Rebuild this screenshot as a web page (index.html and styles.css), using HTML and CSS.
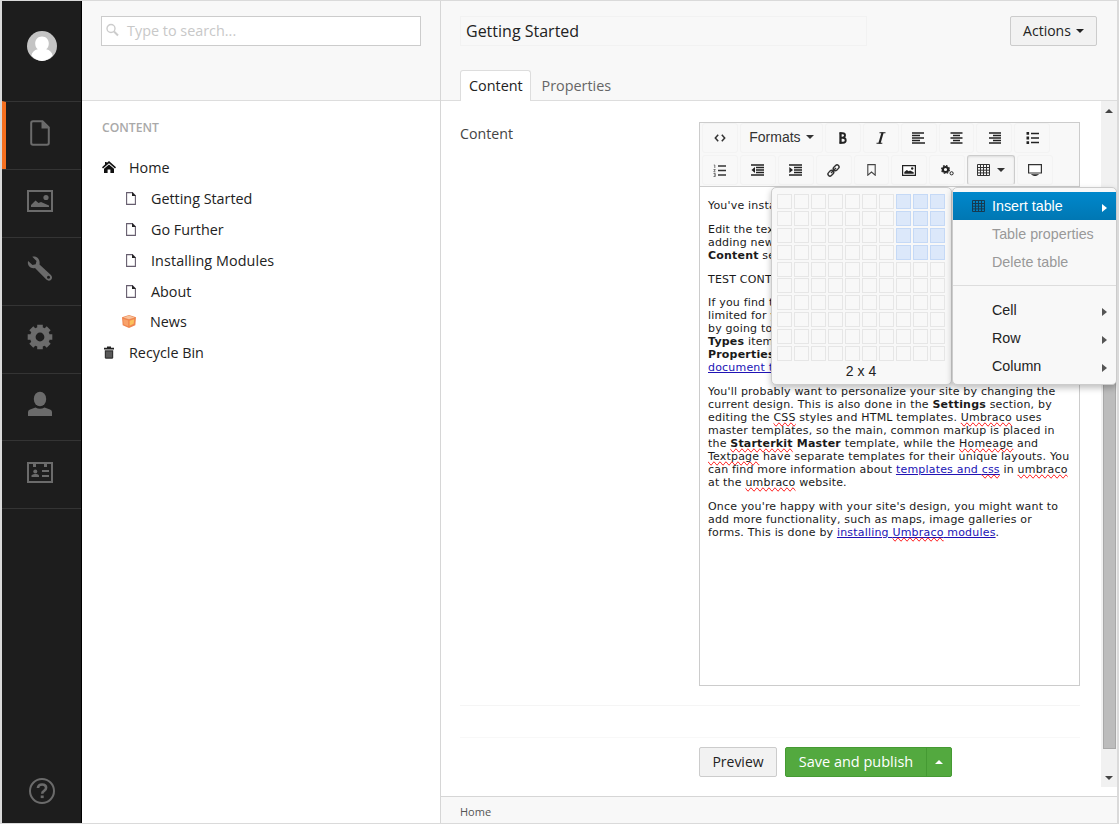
FILE: index.html
```html
<!DOCTYPE html>
<html lang="en">
<head>
<meta charset="utf-8">
<title>Getting Started</title>
<link rel="stylesheet" href="styles.css">
</head>
<body>
<svg class="defs" width="0" height="0">
  <symbol id="page" viewBox="0 0 10 13"><path d="M.6.6H6.400L9.400 3.800V12.4H.6Z" fill="#fff" stroke="#665d6e" stroke-width="1.1"/><path d="M6 0L10 4.100H6Z" fill="#222"/></symbol>
  <symbol id="table" viewBox="0 0 13 12"><path d="M.5.5h12v11H.5ZM.5 3.5h12M.5 6.2h12M.5 8.9h12M3.5.5v11M6.5.5v11M9.5.5v11" fill="none" stroke="currentColor"/></symbol>
</svg>
<div class="app">
  <nav class="rail">
    <div class="rail-user"><svg width="30" height="30" viewBox="0 0 30 30"><circle cx="15" cy="15" r="15" fill="#c4c4c4"/><path d="M15 5.500c4 0 6.800 2.800 6.800 7 0 2.600-1 4.500-2.600 5.800 3.500.8 5.800 3 6.400 6.300A15 15 0 0 1 15 30 15 15 0 0 1 4.400 24.600c.6-3.300 2.900-5.500 6.400-6.300-1.600-1.300-2.600-3.200-2.600-5.800 0-4.200 2.800-7 6.800-7Z" fill="#fff"/></svg></div>
    <a class="rail-item current"><svg width="20" height="26" viewBox="0 0 20 26"><path d="M3 1.200H12.500L18.800 7.500V23q0 1.800-1.800 1.800H3Q1.200 24.800 1.200 23V3Q1.200 1.200 3 1.200Z" fill="none" stroke="#6b6b6b" stroke-width="2"/><path d="M11.500 1v7.500H19Z" fill="#6b6b6b"/></svg></a>
    <a class="rail-item"><svg width="26" height="22" viewBox="0 0 26 22"><path d="M1 1h24v20H1Z" fill="none" stroke="#6b6b6b" stroke-width="2"/><circle cx="19" cy="7.500" r="2.600" fill="#6b6b6b"/><path d="M4 17v-2l4.500-4.500 3 2.500 2.500-1 8 3.500V17Z" fill="#6b6b6b"/></svg></a>
    <a class="rail-item"><svg width="26" height="26" viewBox="0 0 26 26"><path d="M5.300.8L9.500 5 8.700 8.200 5.500 9 1.100 5.100C-.2 9.500 3.500 13.200 8 12l11.300 11.600c1.500 1.500 3.600 1.400 4.800.2 1.300-1.300 1.300-3.300-.2-4.800L12.500 8.500C13.500 3.500 9.800-.3 5.300.8Z" fill="#6b6b6b"/><circle cx="21.500" cy="21.200" r="1.500" fill="#1d1d1d"/></svg></a>
    <a class="rail-item"><svg width="26" height="26" viewBox="-13 -13 26 26"><circle r="7.200" fill="none" stroke="#6b6b6b" stroke-width="5.600"/><g stroke="#6b6b6b" stroke-width="5.600"><path d="M0-12.300V-8M0 12.300V8M-12.300 0H-8M12.300 0H8M-8.700-8.700L-6-6M8.700 8.700L6 6M-8.700 8.700L-6 6M8.700-8.700L6-6"/></g></svg></a>
    <a class="rail-item"><svg width="26" height="26" viewBox="0 0 26 26"><ellipse cx="13" cy="8" rx="6.200" ry="7.300" fill="#6b6b6b"/><path d="M1 25v-4q0-2 2-2.500l5.500-2q4.500 2.500 9 0l5.500 2q2 .5 2 2.500v4Z" fill="#6b6b6b"/></svg></a>
    <a class="rail-item"><svg width="26" height="21" viewBox="0 0 26 21"><path d="M1 1h24v19H1Z" fill="none" stroke="#6b6b6b" stroke-width="2"/><path d="M6 1h3v4H6ZM17 1h3v4h-3ZM15 8h7v2h-7ZM15 13h7v2h-7ZM4.500 15v-1.500q0-1 3.500-1.500t4 1.500V15Z" fill="#6b6b6b"/><circle cx="8.300" cy="9.500" r="2" fill="#6b6b6b"/></svg></a>
    <a class="rail-help"><svg width="28" height="28" viewBox="0 0 28 28"><circle cx="14" cy="14" r="12" fill="none" stroke="#6b6b6b" stroke-width="2"/><path d="M9.900 11q.3-3.500 4.200-3.500 4 0 4 3.300 0 1.700-2 3-1.900 1.200-1.900 2.900" fill="none" stroke="#6b6b6b" stroke-width="2.600"/><path d="M12.700 18.500h3v2.600h-3Z" fill="#6b6b6b"/></svg></a>
  </nav>

  <aside class="tree">
    <header class="tree-head">
      <div class="search"><svg width="13" height="14" viewBox="0 0 13 14"><circle cx="5" cy="5.500" r="4" fill="none" stroke="#ccc" stroke-width="1.400"/><path d="M8 8.500l4 4" stroke="#ccc" stroke-width="2"/></svg><span>Type to search...</span></div>
    </header>
    <h5 class="tree-title">CONTENT</h5>
    <ul class="nodes">
      <li><svg width="14" height="12" viewBox="0 0 14 12"><path d="M7 0l7 6.200-1 1.200L7 2.200 1 7.400 0 6.200 3 3.500V1h1.700v1ZM7 3.400l5 4.300V12H8.400V8.500H5.600V12H2V7.700Z" fill="#111"/></svg>Home</li>
      <li class="child"><svg width="10" height="13"><use href="#page"/></svg>Getting Started</li>
      <li class="child"><svg width="10" height="13"><use href="#page"/></svg>Go Further</li>
      <li class="child wide"><svg width="10" height="13"><use href="#page"/></svg>Installing Modules</li>
      <li class="child"><svg width="10" height="13"><use href="#page"/></svg>About</li>
      <li class="child news"><svg width="14" height="13" viewBox="0 0 14 13"><path d="M7 0l7 2.200-.7 8L7 13 .7 10.200 0 2.200Z" fill="#ef8650"/><path d="M7 .6l5.600 1.800L7 4.300 1.400 2.400Z" fill="#f7c29b"/><path d="M1.200 4l5 1.600v5.600L1.700 9.300Z" fill="#f8a26a"/><path d="M7.600 5.800l4.600-1.600-.5 4.600-4.100 2Z" fill="#fbc15c"/></svg>News</li>
      <li class="bin"><svg width="10" height="13" viewBox="0 0 10 13"><path d="M0 1.800h3V.4h4v1.400h3v1.700H0Z" fill="#222"/><path d="M.8 4.300h8.400v7q0 1.500-1.300 1.500H2.100Q.8 12.800.8 11.300Z" fill="#333"/><path d="M3 5.500v6M5 5.500v6M7 5.500v6" stroke="#888" stroke-width=".9"/></svg>Recycle Bin</li>
    </ul>
  </aside>

  <main class="main">
    <header class="main-head">
      <div class="title-row">
        <div class="title-input">Getting Started</div>
        <button class="btn actions">Actions<i class="caret"></i></button>
      </div>
      <div class="tabs"><a class="tab active">Content</a><a class="tab">Properties</a></div>
    </header>
    <section class="pane">
      <div class="pane-body">
        <div class="field">
          <label class="field-label">Content</label>
          <div class="editor">
            <div class="toolbar">
              <div class="bar">
                <span class="tool"><svg width="12" height="8" viewBox="0 0 12 8"><path d="M4.200.8L1.300 4l2.900 3.200M7.800.8L10.700 4 7.800 7.200" fill="none" stroke="#333" stroke-width="1.500"/></svg></span>
                <span class="tool formats">Formats<i class="caret"></i></span>
                <span class="tool"><svg width="9" height="12" viewBox="0 0 9 12"><path d="M1.700 1.200H4.600Q7 1.200 7 3.300T4.600 5.600H2M2 5.700H5Q7.700 5.800 7.700 8.200T5 10.800H1.700" fill="none" stroke="#222" stroke-width="1.900"/><path d="M2.500.3V11.700" stroke="#222" stroke-width="2.300"/></svg></span>
                <span class="tool"><svg width="10" height="12" viewBox="0 0 10 12"><path d="M3.500.7H9.500M.5 11.300H6.300" stroke="#222" stroke-width="1.100"/><path d="M6.600.5L3.400 11.500" stroke="#222" stroke-width="2.200"/></svg></span>
                <span class="tool"><svg width="13" height="12" viewBox="0 0 13 12"><path d="M0 1h12M0 3.500h8M0 6h12M0 8.500h8M0 11h13" stroke="#222" stroke-width="1.600"/></svg></span>
                <span class="tool"><svg width="13" height="12" viewBox="0 0 13 12"><path d="M.5 1h12M3 3.500h7M.5 6h12M3 8.500h7M.5 11h12" stroke="#222" stroke-width="1.600"/></svg></span>
                <span class="tool"><svg width="13" height="12" viewBox="0 0 13 12"><path d="M1 1h12M5 3.500h8M1 6h12M5 8.500h8M1 11h12" stroke="#222" stroke-width="1.600"/></svg></span>
                <span class="tool"><svg width="13" height="12" viewBox="0 0 13 12"><path d="M5 1.500h8M5 6h8M5 10.500h8" stroke="#222" stroke-width="1.700"/><path d="M.5 0h2.600v2.800H.5ZM.5 4.600h2.600v2.800H.5ZM.5 9.200h2.600V12H.5Z" fill="#222"/></svg></span>
              </div>
              <div class="bar">
                <span class="tool"><svg width="13" height="13" viewBox="0 0 13 13"><path d="M5 2h8M5 6.500h8M5 11h8" stroke="#333" stroke-width="1.500"/><path d="M.8 1h1v3M.5 5.500h1.800L.8 7.800h1.700M.5 9.500h1.800v3H.5M1 11h1" fill="none" stroke="#555" stroke-width=".8"/></svg></span>
                <span class="tool"><svg width="13" height="12" viewBox="0 0 13 12"><path d="M0 1h13M5 3.500h8M5 6h8M5 8.500h8M0 11h13" stroke="#222" stroke-width="1.600"/><path d="M4 3v6L.5 6Z" fill="#222"/></svg></span>
                <span class="tool"><svg width="13" height="12" viewBox="0 0 13 12"><path d="M0 1h13M5 3.500h8M5 6h8M5 8.500h8M0 11h13" stroke="#222" stroke-width="1.600"/><path d="M.3 3v6L4 6Z" fill="#222"/></svg></span>
                <span class="tool"><svg width="13" height="13" viewBox="-6.500 -6.500 13 13"><g transform="rotate(-45)" fill="none" stroke="#333" stroke-width="1.400"><rect x="-7" y="-2" width="6.500" height="4" rx="2"/><rect x=".5" y="-2" width="6.500" height="4" rx="2"/><path d="M-3.500 0h7"/></g></svg></span>
                <span class="tool"><svg width="9" height="12" viewBox="0 0 9 12"><path d="M.8.600h7.400v10.600L4.500 8 .8 11.200Z" fill="none" stroke="#444" stroke-width="1.100"/></svg></span>
                <span class="tool"><svg width="14" height="11" viewBox="0 0 14 11"><path d="M.6.600h12.800v9.800H.6Z" fill="#fff" stroke="#222" stroke-width="1.200"/><path d="M2.300 8.700V7l2.500-2 2 1.200 1.200-.7 3.700 1.800v1.400Z" fill="#222"/><circle cx="10.200" cy="3.500" r="1.200" fill="#222"/></svg></span>
                <span class="tool"><svg width="13" height="11" viewBox="0 0 13 11"><g fill="none" stroke="#222"><circle cx="4.500" cy="4.500" r="2.600" stroke-width="2"/><circle cx="4.500" cy="4.500" r="3.900" stroke-width="1.200" stroke-dasharray="1.700 1.360"/><circle cx="10.600" cy="8.300" r="1.600" stroke-width="1"/></g></svg></span>
                <span class="tool table-tool"><svg width="13" height="12"><use href="#table"/></svg><i class="caret"></i></span>
                <span class="tool"><svg width="14" height="12" viewBox="0 0 14 12"><path d="M.6.600h12.800v8.400H.6Z" fill="#fff" stroke="#333" stroke-width="1.200"/><path d="M3.500 10.500h7L7 12.200Z" fill="#222" stroke="#222" stroke-width=".5"/></svg></span>
              </div>
            </div>
            <div class="copy">
              <p>You've installed Umbraco</p>
              <p>Edit the text on this page<br>adding new pages in the<br><b>Content</b> section</p>
              <p>TEST CONTENT</p>
              <p>If you find that this is too<br>limited for your needs<br>by going to the <b>Document</b><br><b>Types</b> item in the tree<br><b>Properties</b> page<br><a>document types</a></p>
              <p>You'll probably want to personalize your site by changing the<br>current design. This is also done in the <b>Settings</b> section, by<br>editing the <u>CSS</u> styles and HTML templates. <u>Umbraco</u> uses<br>master templates, so the main, common markup is placed in<br>the <b><u>Starterkit</u> Master</b> template, while the <u>Homeage</u> and<br><u>Textpage</u> have separate templates for their unique layouts. You<br>can find more information about <a>templates and <u>css</u></a> in <u>umbraco</u><br>at the <u>umbraco</u> website.</p>
              <p>Once you're happy with your site's design, you might want to<br>add more functionality, such as maps, image galleries or<br>forms. This is done by <a>installing <u>Umbraco</u> modules</a>.</p>
            </div>
            <div class="popup picker"><div class="cells" id="cells"></div><div class="size">2 x 4</div></div>
            <div class="popup menu">
              <div class="item selected"><svg width="13" height="12"><use href="#table"/></svg><span>Insert table</span><i class="arrow"></i></div>
              <div class="item disabled"><span>Table properties</span></div>
              <div class="item disabled"><span>Delete table</span></div>
              <hr>
              <div class="item"><span>Cell</span><i class="arrow"></i></div>
              <div class="item"><span>Row</span><i class="arrow"></i></div>
              <div class="item"><span>Column</span><i class="arrow"></i></div>
            </div>
          </div>
        </div>
        <div class="form-actions">
          <button class="btn preview">Preview</button>
          <div class="publish"><button>Save and publish</button><button class="more"><i class="caret up"></i></button></div>
        </div>
      </div>
      <div class="scrollbar"><i class="caret up"></i><div class="thumb"></div><i class="caret"></i></div>
    </section>
    <footer class="crumbs">Home</footer>
  </main>
</div>
<script src="script.js"></script>
</body>
</html>
```

FILE: styles.css
```css
* { box-sizing: border-box; }
body { margin: 0; font-family: "Open Sans", sans-serif; font-size: 14px; color: #222; background: #fff; }
svg { display: block; flex: none; }
button { font: inherit; margin: 0; }
.defs { position: absolute; }
.app { width: 1119px; height: 824px; display: flex; border: solid #dadada; border-width: 1px 2px 1px 2px; overflow: hidden; }

.rail { width: 80px; flex: none; background: #1d1d1d; border-right: 1px solid #000; display: flex; flex-direction: column; }
.rail-user { height: 100.4px; padding: 30px 0 0 25px; flex: none; }
.rail-item { height: 67.8px; flex: none; border-top: 1px solid #343434; display: flex; align-items: center; justify-content: center; padding: 0 4px 5px 0; }
.rail-item:nth-last-child(2) { height: 68.8px; border-bottom: 1px solid #343434; }
.rail-item.current { border-left: 4px solid #f57020; padding-right: 8px; }
.rail-help { margin-top: auto; padding: 0 0 18px 26px; }

.tree { width: 358px; flex: none; }
.tree-head { height: 100px; background: #f8f8f8; border-bottom: 1px solid #ddd; padding: 15px 19px; }
.search { width: 320px; height: 30px; border: 1px solid #ccc; background: #fff; display: flex; align-items: center; gap: 8px; padding: 0 0 2px 4px; color: #c8c8c8; font-size: 14.4px; }
.tree-title { margin: 19px 0 0 20px; font-size: 12.2px; line-height: 16px; font-weight: 600; color: #a9a9a9; }
.nodes { list-style: none; margin: 16px 0 0; padding: 0 0 0 20px; }
.nodes li { height: 30.9px; display: flex; align-items: center; gap: 13px; font-size: 14.35px; }
.nodes .child { padding-left: 24px; gap: 15px; }
.nodes .wide { letter-spacing: .1px; }
.nodes .news { padding-left: 20px; gap: 14px; }
.nodes .bin { padding-left: 2px; gap: 15px; }

.main { flex: 1; min-width: 0; border-left: 1px solid #d6d6d6; display: flex; flex-direction: column; }
.main-head { height: 100px; flex: none; background: #f8f8f8; border-bottom: 1px solid #ddd; padding: 15px 20px 0 19px; display: flex; flex-direction: column; justify-content: space-between; }
.title-row { display: flex; justify-content: space-between; }
.title-input { width: 407px; height: 30px; border: 1px solid #f2f2f2; padding-left: 5px; line-height: 28px; font-size: 16px; }
.btn { border: 1px solid #ccc; border-radius: 2px; background: #f2f2f2; color: #222; font-size: 14px; height: 30px; padding: 0 0 1px; display: flex; align-items: center; justify-content: center; gap: 5px; }
.actions { width: 87px; }
.caret { border: solid transparent; border-width: 4px 4px 0; border-top-color: currentColor; width: 0; height: 0; }
.caret.up { border-width: 0 4px 4px; border-bottom-color: currentColor; }
.tabs { display: flex; height: 31px; margin-bottom: -1px; }
.tab { padding: 0 10.500px; line-height: 31px; color: #666; font-size: 14.4px; }
.tab.active { width: 71px; padding: 0 8px; color: #222; background: #fff; border: 1px solid #ddd; border-bottom: 0; border-radius: 3px 3px 0 0; line-height: 30px; }

.pane { flex: 1; min-height: 0; display: flex; justify-content: space-between; }
.pane-body { width: 620px; margin-left: 19px; }
.field { display: flex; padding-top: 21px; height: 605px; border-bottom: 1px solid #f5f5f5; }
.field-label { width: 239px; line-height: 24px; color: #444; font-size: 14.2px; }
.editor { position: relative; width: 381px; height: 564px; border: 1px solid #ccc; }
.toolbar { height: 64px; background: #f8f8f8; border-bottom: 1px solid #ccc; padding: 0 2px; display: flex; flex-direction: column; gap: 2px; }
.bar { display: flex; gap: 2px; height: 30px; }
.tool { width: 35.9px; height: 30px; border: 1px solid #f3f3f3; border-radius: 3px; display: flex; align-items: center; justify-content: center; color: #333; }
.formats { width: 83px; gap: 5px; font-family: "Liberation Sans", sans-serif; font-size: 14px; padding-bottom: 3px; }
.table-tool { width: 48px; gap: 7px; border-color: #ccc; border-bottom-color: #eee; background: #f5f5f5; box-shadow: inset 0 1px 2px #ddd; }
.copy { padding: 12px 8px; font: 11px/13px "DejaVu Sans", sans-serif; color: #1a1a1a; white-space: nowrap; letter-spacing: .19px; }
.copy p { margin: 0 0 10.8px; }
.copy p:last-child { margin-top: -.4px; }
.copy a { color: #2013b5; text-decoration: underline; }
.copy u { text-decoration: underline wavy #e33; text-decoration-line: spelling-error; }

.popup { position: absolute; top: 64px; height: 198px; background: #f8f8f8; border: 1px solid #ccc; border-radius: 5px; box-shadow: 0 3px 6px rgba(0,0,0,.25); font-family: "Liberation Sans", sans-serif; font-size: 14px; }
.picker { left: 70.5px; width: 181px; padding: 6px 5.500px; }
.cells { display: grid; grid-template-columns: repeat(10, 1fr); grid-auto-rows: 15px; gap: 1.9px; width: 168px; }
.cells i { border: 1px solid #e6e6e6; }
.cells i.on { background: #dce8fa; border-color: #c5d9f6; }
.size { text-align: center; line-height: 18px; padding-top: 1px; }
.menu { left: 252px; width: 165px; padding-top: 4px; }
.item { height: 28px; display: flex; align-items: center; padding: 0 9px 1px 39px; color: #222; font-size: 14.3px; }
.item.selected { color: #fff; background: linear-gradient(#0088cc, #0077b3); padding-left: 19px; gap: 7px; }
.item svg { color: #173a50; }
.item.disabled { color: #999; }
.arrow { margin: 4px 0 0 auto; border: solid transparent; border-width: 4px 0 4px 5px; border-left-color: #555; }
.selected .arrow { border-left-color: #fff; }
.menu hr { border: 0; border-top: 1px solid #ddd; margin: 9px 0 10px; }

.form-actions { margin-top: 31px; border-top: 1px solid #f8f8f8; padding: 9px 0 0 239px; display: flex; gap: 8px; }
.preview { width: 78px; }
.publish { display: flex; height: 30px; width: 167px; background: #53a93f; border: 1px solid #459a33; border-radius: 2px; }
.publish button { flex: 1; background: none; border: 0; padding: 0 0 1px; color: #fff; font-size: 14.5px; white-space: nowrap; }
.publish .more { flex: 0 0 25px; border-left: 1px solid #459a33; display: flex; align-items: center; justify-content: center; }
.scrollbar { width: 16px; height: 686px; background: #f1f1f1; display: flex; flex-direction: column; align-items: center; padding: 8px 0 7px; color: #444; }
.thumb { width: 13px; flex: 1; margin: 150px 0 27px; background: #bcbcbc; border: 1px solid #a8a8a8; }
.crumbs { height: 27px; flex: none; border-top: 1px solid #d6d6d6; background: #f8f8f8; padding-left: 19px; font-size: 11px; line-height: 30px; color: #555; }
```

FILE: script.js
```js
// Fill the 10 x 10 table-size picker; the highlighted block sits top right.
const cells = document.getElementById("cells");
for (let row = 0; row < 10; row++) {
  for (let col = 0; col < 10; col++) {
    const cell = document.createElement("i");
    if (row < 4 && col > 6) cell.className = "on";
    cells.append(cell);
  }
}
```
